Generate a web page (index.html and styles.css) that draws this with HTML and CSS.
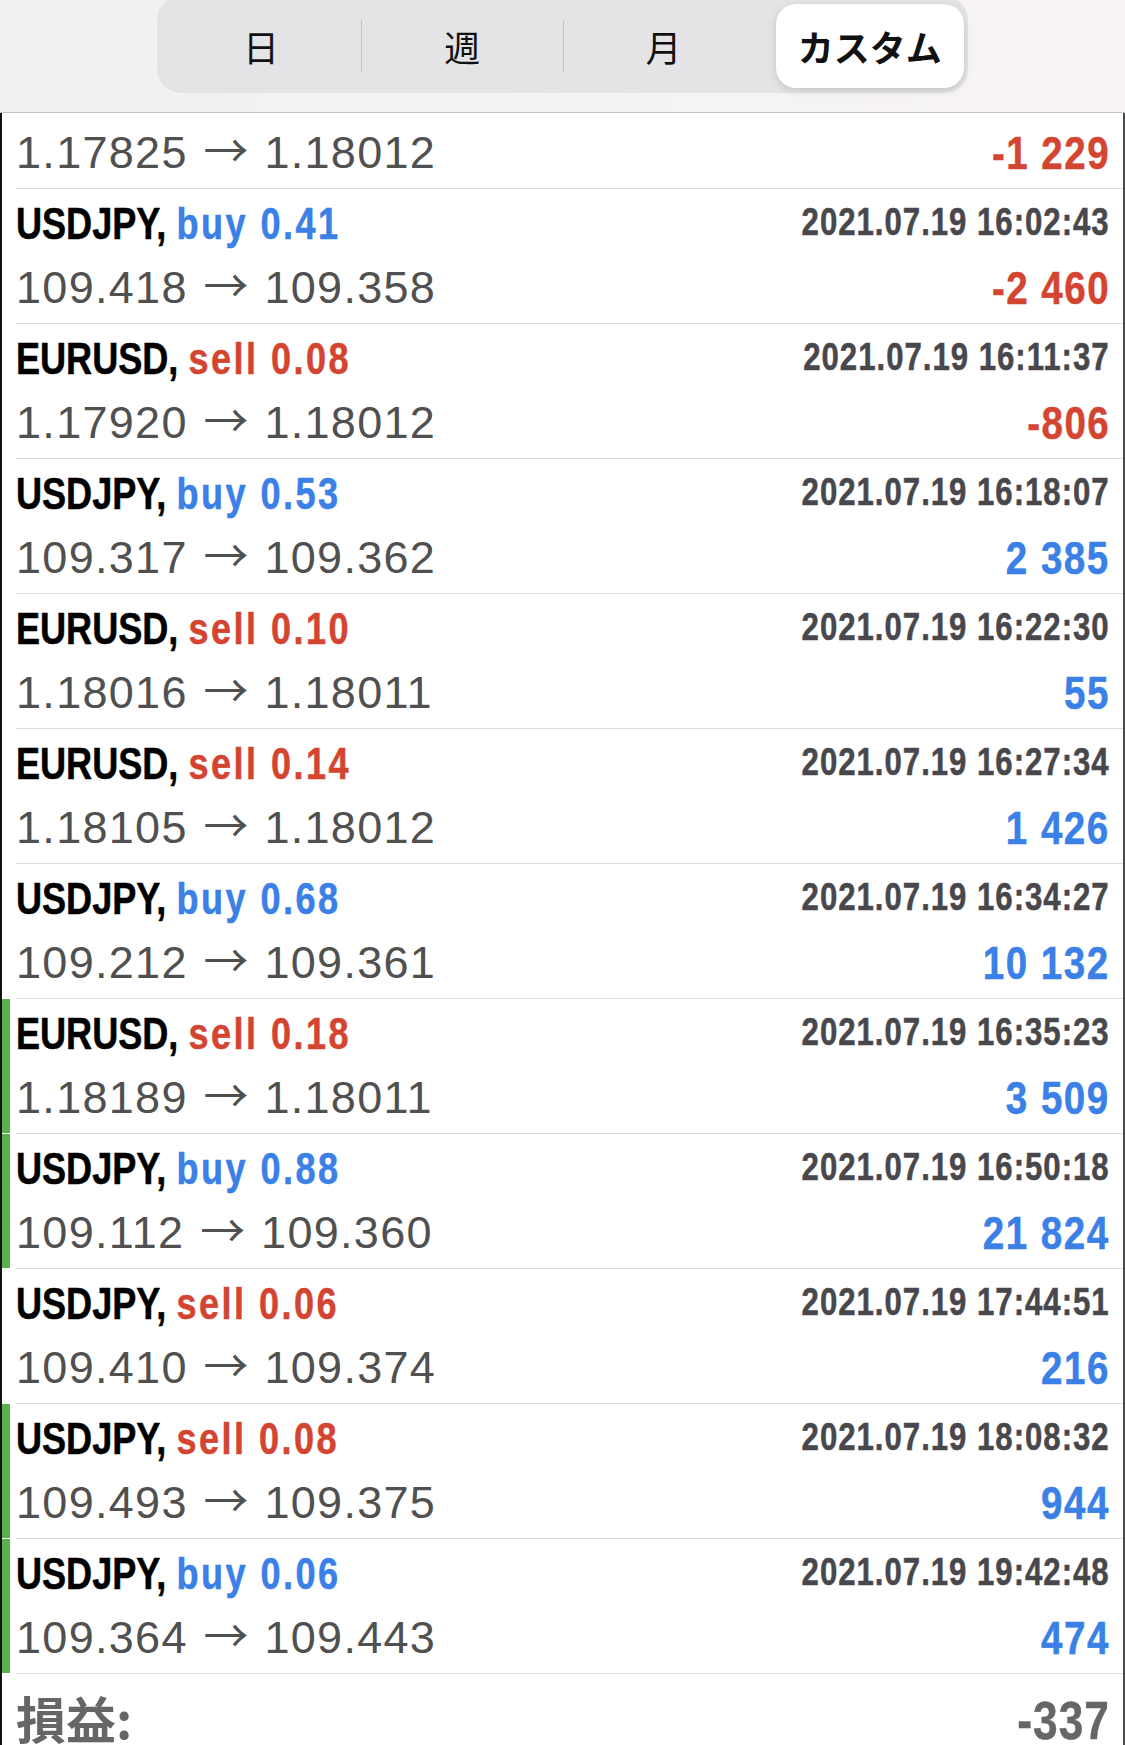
FILE: index.html
```html
<!DOCTYPE html>
<html lang="ja">
<head>
  <title>取引履歴</title>
  <meta charset="UTF-8">
  <meta name="viewport" content="width=device-width, initial-scale=1.0">
  <link rel="stylesheet" href="styles.css">
</head>
<body>
  <header class="topbar">
    <div class="segmented">
      <div class="seg">日</div>
      <span class="seg-divider"></span>
      <div class="seg">週</div>
      <span class="seg-divider"></span>
      <div class="seg">月</div>
      <div class="seg active"><span class="pill">カスタム</span></div>
    </div>
  </header>

  <div class="deals">
    <div class="deal partial">
      <div class="mark"></div>
      <div class="deal-body">
        <div class="line-bottom">
          <span class="price">1.17825 <span class="arrow">→</span> 1.18012</span>
          <span class="profit loss">-1 229</span>
        </div>
      </div>
    </div>

    <div class="deal">
      <div class="mark"></div>
      <div class="deal-body">
        <div class="line-top">
          <span class="sym">USDJPY, <span class="side buy">buy 0.41</span></span>
          <span class="time">2021.07.19 16:02:43</span>
        </div>
        <div class="line-bottom">
          <span class="price">109.418 <span class="arrow">→</span> 109.358</span>
          <span class="profit loss">-2 460</span>
        </div>
      </div>
    </div>

    <div class="deal">
      <div class="mark"></div>
      <div class="deal-body">
        <div class="line-top">
          <span class="sym">EURUSD, <span class="side sell">sell 0.08</span></span>
          <span class="time">2021.07.19 16:11:37</span>
        </div>
        <div class="line-bottom">
          <span class="price">1.17920 <span class="arrow">→</span> 1.18012</span>
          <span class="profit loss">-806</span>
        </div>
      </div>
    </div>

    <div class="deal">
      <div class="mark"></div>
      <div class="deal-body">
        <div class="line-top">
          <span class="sym">USDJPY, <span class="side buy">buy 0.53</span></span>
          <span class="time">2021.07.19 16:18:07</span>
        </div>
        <div class="line-bottom">
          <span class="price">109.317 <span class="arrow">→</span> 109.362</span>
          <span class="profit gain">2 385</span>
        </div>
      </div>
    </div>

    <div class="deal">
      <div class="mark"></div>
      <div class="deal-body">
        <div class="line-top">
          <span class="sym">EURUSD, <span class="side sell">sell 0.10</span></span>
          <span class="time">2021.07.19 16:22:30</span>
        </div>
        <div class="line-bottom">
          <span class="price">1.18016 <span class="arrow">→</span> 1.18011</span>
          <span class="profit gain">55</span>
        </div>
      </div>
    </div>

    <div class="deal">
      <div class="mark"></div>
      <div class="deal-body">
        <div class="line-top">
          <span class="sym">EURUSD, <span class="side sell">sell 0.14</span></span>
          <span class="time">2021.07.19 16:27:34</span>
        </div>
        <div class="line-bottom">
          <span class="price">1.18105 <span class="arrow">→</span> 1.18012</span>
          <span class="profit gain">1 426</span>
        </div>
      </div>
    </div>

    <div class="deal">
      <div class="mark"></div>
      <div class="deal-body">
        <div class="line-top">
          <span class="sym">USDJPY, <span class="side buy">buy 0.68</span></span>
          <span class="time">2021.07.19 16:34:27</span>
        </div>
        <div class="line-bottom">
          <span class="price">109.212 <span class="arrow">→</span> 109.361</span>
          <span class="profit gain">10 132</span>
        </div>
      </div>
    </div>

    <div class="deal flagged">
      <div class="mark"></div>
      <div class="deal-body">
        <div class="line-top">
          <span class="sym">EURUSD, <span class="side sell">sell 0.18</span></span>
          <span class="time">2021.07.19 16:35:23</span>
        </div>
        <div class="line-bottom">
          <span class="price">1.18189 <span class="arrow">→</span> 1.18011</span>
          <span class="profit gain">3 509</span>
        </div>
      </div>
    </div>

    <div class="deal flagged">
      <div class="mark"></div>
      <div class="deal-body">
        <div class="line-top">
          <span class="sym">USDJPY, <span class="side buy">buy 0.88</span></span>
          <span class="time">2021.07.19 16:50:18</span>
        </div>
        <div class="line-bottom">
          <span class="price">109.112 <span class="arrow">→</span> 109.360</span>
          <span class="profit gain">21 824</span>
        </div>
      </div>
    </div>

    <div class="deal">
      <div class="mark"></div>
      <div class="deal-body">
        <div class="line-top">
          <span class="sym">USDJPY, <span class="side sell">sell 0.06</span></span>
          <span class="time">2021.07.19 17:44:51</span>
        </div>
        <div class="line-bottom">
          <span class="price">109.410 <span class="arrow">→</span> 109.374</span>
          <span class="profit gain">216</span>
        </div>
      </div>
    </div>

    <div class="deal flagged">
      <div class="mark"></div>
      <div class="deal-body">
        <div class="line-top">
          <span class="sym">USDJPY, <span class="side sell">sell 0.08</span></span>
          <span class="time">2021.07.19 18:08:32</span>
        </div>
        <div class="line-bottom">
          <span class="price">109.493 <span class="arrow">→</span> 109.375</span>
          <span class="profit gain">944</span>
        </div>
      </div>
    </div>

    <div class="deal flagged">
      <div class="mark"></div>
      <div class="deal-body">
        <div class="line-top">
          <span class="sym">USDJPY, <span class="side buy">buy 0.06</span></span>
          <span class="time">2021.07.19 19:42:48</span>
        </div>
        <div class="line-bottom">
          <span class="price">109.364 <span class="arrow">→</span> 109.443</span>
          <span class="profit gain">474</span>
        </div>
      </div>
    </div>

    <div class="total">
      <span class="total-label">損益:</span>
      <span class="total-value">-337</span>
    </div>
  </div>
</body>
</html>
```

FILE: styles.css
```css
* {
  box-sizing: border-box;
}
body {
  margin: 0;
  background: #fff;
  font-family: 'Liberation Sans', Arial, sans-serif;
  height: 1745px;
  overflow: hidden;
}

/* top bar with the period switch */
.topbar {
  display: flex;
  justify-content: center;
  align-items: flex-start;
  height: 113px;
  background: linear-gradient(90deg, #f1f1f1, #f8f4f4);
  border-bottom: 1px solid #c4c4c4;
}
.segmented {
  width: 811px;
  height: 97px;
  margin-top: -4px;
  padding: 8px 4px 5px;
  display: flex;
  align-items: stretch;
  background: #e4e4e7;
  border-radius: 24px;
}
.seg {
  flex: 1 1 0;
  display: flex;
  align-items: center;
  justify-content: center;
  font-family: 'Noto Sans CJK JP', sans-serif;
  font-size: 36px;
  color: #111;
}
.seg-divider {
  width: 1px;
  align-self: center;
  height: 52px;
  background: #c2c2c6;
}
.seg.active {
  align-items: stretch;
}
.pill {
  flex: 1;
  margin-left: 12px;
  display: flex;
  align-items: center;
  justify-content: center;
  background: #fff;
  border-radius: 20px;
  font-weight: 700;
  box-shadow: 0 3px 8px rgba(0, 0, 0, 0.12), 0 0 1px rgba(0, 0, 0, 0.1);
}

/* deal list */
.deals {
  border-left: 2px solid #111;
  border-right: 2px solid #4a4a4a;
  height: 1632px;
}
.deal {
  display: flex;
  height: 135px;
}
.deal.partial {
  height: 76px;
}
.mark {
  width: 8px;
  margin-bottom: 1px;
}
.deal.flagged .mark {
  background: #58b14a;
}
.deal-body {
  flex: 1;
  margin-left: 6px;
  padding-right: 13px;
  border-bottom: 1px solid #d9d9d9;
}
.deal.partial .deal-body {
  padding-top: 11px;
}
.line-top {
  display: flex;
  justify-content: space-between;
  align-items: flex-start;
  height: 70px;
}
.line-bottom {
  display: flex;
  justify-content: space-between;
  align-items: flex-start;
  height: 57px;
}

/* condensed bold text: Arial metrics squeezed to a narrow cut */
.sym,
.time,
.profit,
.total-value {
  font-weight: 700;
  white-space: pre;
  transform: scaleX(0.82);
  -webkit-text-stroke: 0.5px currentColor;
}
.sym {
  font-size: 44px;
  line-height: 70px;
  color: #000;
  transform-origin: left center;
}
.side {
  letter-spacing: 3px;
}
.side.buy { color: #3a80e6; }
.side.sell { color: #d34531; }
.time {
  font-size: 38px;
  line-height: 66px;
  letter-spacing: 1.2px;
  color: #48484c;
  transform-origin: right center;
}
.price {
  font-size: 45px;
  line-height: 57px;
  letter-spacing: 1.3px;
  color: #505050;
  white-space: pre;
}
.arrow {
  font-family: 'Noto Sans CJK JP', sans-serif;
  font-weight: 400;
  line-height: 1;
  letter-spacing: 0;
  margin: 0 2px;
}
.profit {
  font-size: 47px;
  line-height: 57px;
  letter-spacing: 1.8px;
  transform-origin: right center;
}
.profit.loss { color: #d34531; }
.profit.gain { color: #3a80e6; }

/* summary */
.total {
  display: flex;
  justify-content: space-between;
  align-items: baseline;
  margin-left: 14px;
  padding: 18px 13px 0 0;
  color: #666;
}
.total-label {
  font-family: 'Noto Sans CJK JP', sans-serif;
  font-weight: 700;
  font-size: 50px;
  line-height: 1;
}
.total-value {
  font-size: 54px;
  line-height: 1;
  letter-spacing: 1.2px;
  transform-origin: right center;
}
```
